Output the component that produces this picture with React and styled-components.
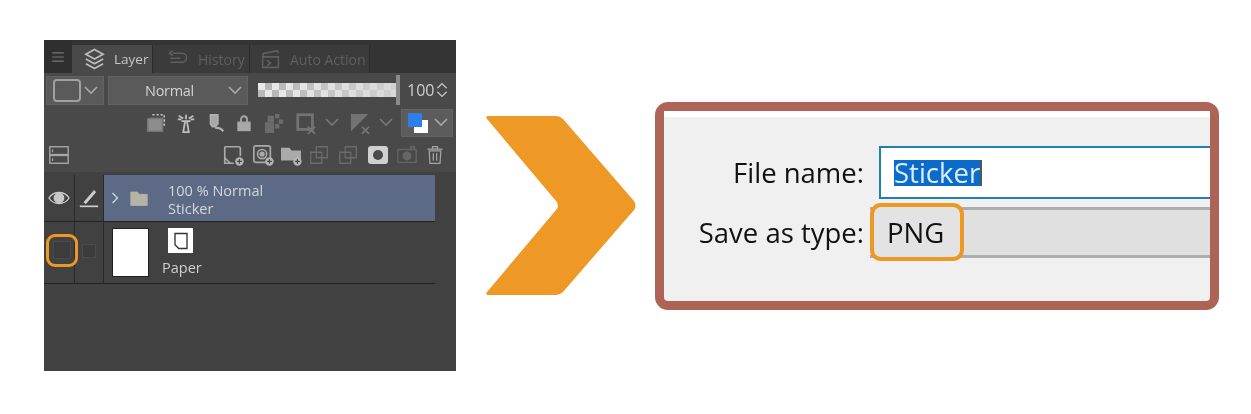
import styled, { createGlobalStyle } from 'styled-components'

const GlobalStyle = createGlobalStyle`
    html, body {
        margin: 0;
        padding: 0;
        background: #ffffff;
    }
`

const Page = styled.div`
    width: 1251px;
    height: 414px;
    box-sizing: border-box;
    padding: 40px 0 0 44px;
    display: flex;
    align-items: flex-start;
    overflow: hidden;
`

const Panel = styled.div`
    width: 412px;
    height: 331px;
    flex: none;
    display: flex;
    flex-direction: column;
    background: #414141;
    color: #c8c8c8;
    font-family: "Open Sans", "Noto Sans", sans-serif;
    filter: blur(0.45px);
`

const TabStrip = styled.div`
    height: 33px;
    flex: none;
    display: flex;
    align-items: flex-end;
    background: #343434;
`

const MenuCell = styled.div`
    width: 28px;
    height: 33px;
    display: flex;
    align-items: center;
    justify-content: center;
    background: #2f2f2f;
    color: #6f6f6f;
`

const Tab = styled.div`
    width: ${({ $w }) => $w}px;
    height: 28px;
    box-sizing: border-box;
    display: flex;
    align-items: center;
    gap: ${({ $active }) => ($active ? 8 : 9)}px;
    padding-left: ${({ $pad }) => $pad}px;
    background: ${({ $active }) => ($active ? '#494949' : '#3b3b3b')};
    color: ${({ $active }) => ($active ? '#c6c6c6' : '#5f5f5f')};
    border-right: 1px solid #2b2b2b;
    font-size: ${({ $active }) => ($active ? 13.5 : 14)}px;
`

const ToolRow = styled.div`
    height: ${({ $h }) => $h}px;
    flex: none;
    box-sizing: border-box;
    display: flex;
    align-items: center;
    background: #494949;
    padding: ${({ $pad }) => $pad || '0'};
    justify-content: ${({ $end }) => ($end ? 'flex-end' : 'flex-start')};
    gap: ${({ $gap }) => $gap || 0}px;
`

const Select = styled.div`
    width: ${({ $w }) => $w}px;
    height: 29px;
    flex: none;
    box-sizing: border-box;
    display: flex;
    align-items: center;
    justify-content: space-between;
    padding: 0 5px 0 6px;
    background: #5a5a5a;
    border: 1px solid #626262;
    margin-right: ${({ $mr }) => $mr || 0}px;
`

const SwatchSelect = styled(Select)`
    height: 28px;
    padding: 0 4px 0 5px;
    background: #5c5c5c;
`

const SelectLabel = styled.span`
    flex: 1;
    text-align: center;
    font-size: 14.5px;
    letter-spacing: -0.3px;
    color: #d2d2d2;
    padding-right: 4px;
`

const Swatch = styled.div`
    width: 24px;
    height: 19px;
    border: 2px solid #a0a0a0;
    border-radius: 4px;
`

const Opacity = styled.div`
    width: 138px;
    height: 14px;
    flex: none;
    margin-left: 10px;
    background-color: #dadada;
    background-image:
        linear-gradient(90deg, rgba(214, 214, 214, 0) 10%, rgba(214, 214, 214, 0.85) 100%),
        repeating-conic-gradient(#b8b8b8 0 25%, #e8e8e8 0 50%);
    background-size: 100% 100%, 14px 14px;
`

const OpacityThumb = styled.div`
    width: 4px;
    height: 30px;
    flex: none;
    background: #8a8a8a;
    margin-right: 7px;
`

const Percent = styled.span`
    width: 28px;
    font-size: 16px;
    color: #cfcfcf;
`

const Spinner = styled.div`
    display: flex;
    flex-direction: column;
    gap: 2px;
    color: #c0c0c0;
`

const LayerRow = styled.div`
    height: ${({ $h }) => $h}px;
    width: 391px;
    flex: none;
    display: flex;
    border-bottom: 1px solid #232323;
    margin-top: ${({ $mt }) => $mt || 0}px;
`

const VisCell = styled.div`
    width: ${({ $w }) => $w}px;
    flex: none;
    box-sizing: border-box;
    display: flex;
    align-items: center;
    justify-content: center;
    padding-bottom: ${({ $lift }) => $lift || 0}px;
    border-right: 1px solid #2a2a2a;
`

const Empty = styled.div`
    width: ${({ $s }) => $s}px;
    height: ${({ $s }) => $s}px;
    box-sizing: border-box;
    border: 1px solid #4b4b4b;
    background: #3c3c3c;
`

const Ring = styled.div`
    width: 32px;
    height: 33px;
    flex: none;
    box-sizing: border-box;
    margin: 0 -3px 0 3px;
    display: flex;
    align-items: center;
    justify-content: center;
    border: 3.5px solid #ee9824;
    border-radius: 9px;
    position: relative;
`

const LayerBody = styled.div`
    flex: 1;
    display: flex;
    align-items: ${({ $top }) => ($top ? 'flex-start' : 'center')};
    background: ${({ $selected }) => ($selected ? '#5d6a86' : 'transparent')};
    padding: ${({ $top }) => ($top ? '6px 0 0 8px' : '0 0 0 7px')};
`

const LayerTitle = styled.div`
    font-size: 14.5px;
    line-height: 18px;
    color: #d3d6dc;
    margin-left: 18px;
    padding-top: 4px;
`

const Thumb = styled.div`
    width: 37px;
    height: 49px;
    flex: none;
    background: #ffffff;
    border: 1px solid #202020;
    box-sizing: border-box;
`

const PaperInfo = styled.div`
    margin-left: 13px;
    display: flex;
    flex-direction: column;
    gap: 5px;
    font-size: 14.5px;
    color: #cfcfcf;
`

const PaperBadge = styled.div`
    width: 25px;
    height: 25px;
    box-sizing: border-box;
    margin-left: 6px;
    background: #ffffff;
    display: flex;
    align-items: center;
    justify-content: center;
    color: #333333;
`

const Arrow = styled.svg`
    flex: none;
    margin: 76px 0 0 30px;
`

const Dialog = styled.div`
    width: 564px;
    height: 208px;
    flex: none;
    box-sizing: border-box;
    margin: 62px 0 0 19px;
    border: 9px solid #ad6457;
    border-radius: 13px;
    background: #f0f0f0;
    font-family: "Open Sans", "Noto Sans", sans-serif;
    font-size: 27.5px;
    color: #111111;
`

const DialogEdge = styled.div`
    height: 35px;
    background: linear-gradient(#ffffff 0 0) top / 100% 6px no-repeat;
`

const FieldRow = styled.div`
    display: flex;
    align-items: center;
    height: ${({ $h }) => $h}px;
    margin-bottom: ${({ $mb }) => $mb || 0}px;
`

const FieldLabel = styled.div`
    width: 200px;
    flex: none;
    text-align: right;
    filter: blur(0.4px);
`

const NameInput = styled.div`
    flex: 1;
    height: 53px;
    box-sizing: border-box;
    margin-left: 15px;
    display: flex;
    align-items: center;
    padding-left: 13px;
    background: #ffffff;
    border: 2px solid #1f7fb3;
    border-right: 0;
`

const Selected = styled.span`
    background: #0a6bc8;
    color: #dcecff;
    height: 26px;
    line-height: 25px;
    border-right: 2px solid #555555;
    filter: blur(0.4px);
`

const TypeCombo = styled.div`
    flex: 1;
    height: 51px;
    box-sizing: border-box;
    margin-left: 6px;
    display: flex;
    align-items: center;
    background: #e0e0e0;
    border-top: 3px solid #adadad;
    border-bottom: 3px solid #adadad;
`

const TypeChip = styled.div`
    width: 94px;
    height: 58px;
    flex: none;
    box-sizing: border-box;
    display: flex;
    align-items: center;
    padding-left: 13px;
    border: 4px solid #ee9824;
    border-radius: 11px;
    background: #e3e3e3;
    filter: blur(0.3px);
`

const Ic = ({ w = 22, h = 22, vb = '0 0 24 24', children, color = '#9a9a9a', style }) => (
    <svg width={w} height={h} viewBox={vb} fill="none" stroke={color} strokeWidth="1.8" style={{ flex: 'none', ...style }}>
        {children}
    </svg>
)

const Chevron = ({ color = '#a8a8a8', up, w = 14, h = 9 }) => (
    <svg width={w} height={h} viewBox="0 0 14 9" fill="none" stroke={color} strokeWidth="1.6" style={{ flex: 'none' }}>
        <path d={up ? 'M1 8l6-6 6 6' : 'M1 1l6 6 6-6'} />
    </svg>
)

const Plus = () => (
    <g>
        <circle cx="19" cy="19" r="4.6" fill="#b5b5b5" stroke="none" />
        <path d="M19 16.4v5.2M16.4 19h5.2" stroke="#444" strokeWidth="1.2" />
    </g>
)

function App() {
    return (
        <>
            <GlobalStyle />
            <Page>
                <Panel>
                    <TabStrip>
                        <MenuCell>
                            <Ic w={14} h={14} color="#777">
                                <path d="M2 5h20M2 12h20M2 19h20" strokeWidth="2" />
                            </Ic>
                        </MenuCell>
                        <Tab $w={81} $pad={11} $active>
                            <Ic w={23} h={26} color="#bdbdbd">
                                <path d="M12 2l9 5-9 5-9-5zM3 12l9 5 9-5M3 17l9 5 9-5" />
                            </Ic>
                            Layer
                        </Tab>
                        <Tab $w={97} $pad={12}>
                            <Ic w={24} h={20} color="#5f5f5f">
                                <path d="M7 5h11a5 5 0 0 1 0 11H4M7 2L3 5l4 3M4 11h12" />
                            </Ic>
                            History
                        </Tab>
                        <Tab $w={120} $pad={10}>
                            <Ic w={21} h={21} color="#5f5f5f">
                                <path d="M3 9h18v12H3zM3 9l1-4 16-3 1 3M8 13l4 3-4 3" />
                            </Ic>
                            Auto Action
                        </Tab>
                    </TabStrip>
                    <ToolRow $h={34} $pad="0 0 0 2px">
                        <Select $w={58} $mr={4}>
                            <Swatch />
                            <Chevron />
                        </Select>
                        <Select $w={140}>
                            <SelectLabel>Normal</SelectLabel>
                            <Chevron />
                        </Select>
                        <Opacity />
                        <OpacityThumb />
                        <Percent>100</Percent>
                        <Spinner>
                            <Chevron up color="#c8c8c8" h={7} />
                            <Chevron color="#c8c8c8" h={7} />
                        </Spinner>
                    </ToolRow>
                    <ToolRow $h={31} $pad="0 3px 0 0" $end $gap={8}>
                        <Ic>
                            <path d="M5 7h14v14H3V7" fill="#8d8d8d" stroke="#777" />
                            <path d="M8 3h13v13" strokeDasharray="2.5 2" stroke="#c0c0c0" />
                        </Ic>
                        <Ic color="#bdbdbd">
                            <path d="M9 22l2-12h2l2 12zM7 10h10M12 3v5M4 4l5 3M20 4l-5 3M3 8h4M17 8h4" strokeWidth="2" />
                        </Ic>
                        <Ic color="#b0b0b0">
                            <path d="M6 3h8v10l-3 3H8L6 13z" fill="#a8a8a8" />
                            <path d="M11 17c3 0 6 0 9 4" strokeWidth="2.4" />
                        </Ic>
                        <Ic w={18} color="#a8a8a8">
                            <rect x="4" y="11" width="16" height="11" fill="#a8a8a8" />
                            <path d="M8 11V7a4 4 0 0 1 8 0v4" strokeWidth="2.4" />
                        </Ic>
                        <Ic color="#6c6c6c" style={{ marginLeft: 2 }}>
                            <path d="M3 12h8v10H3zM6 5h5v5H6zM14 3h3v3h-3zM18 9h3v3h-3zM14 14h3v3h-3z" fill="#6c6c6c" />
                        </Ic>
                        <Ic color="#737373" style={{ marginLeft: 2 }}>
                            <rect x="3" y="3" width="16" height="16" strokeWidth="3" />
                            <path d="M14 16l8 8M22 16l-8 8" strokeWidth="2" />
                        </Ic>
                        <Chevron color="#787878" />
                        <Ic color="#737373" style={{ marginLeft: 2 }}>
                            <path d="M3 3h16L3 19z" fill="#737373" />
                            <path d="M14 16l8 8M22 16l-8 8" strokeWidth="2" />
                        </Ic>
                        <Chevron color="#787878" />
                        <SwatchSelect $w={52}>
                            <svg width="22" height="22" viewBox="0 0 22 22" style={{ flex: 'none' }}>
                                <rect x="7" y="8" width="14" height="13" fill="#fff" />
                                <rect x="1" y="1" width="14" height="14" fill="#2f7fe8" />
                            </svg>
                            <Chevron />
                        </SwatchSelect>
                    </ToolRow>
                    <ToolRow $h={34} $pad="0 8px 0 4px" $gap={6}>
                        <Ic color="#a8a8a8" style={{ marginRight: 146 }}>
                            <rect x="2" y="3" width="20" height="8.5" strokeWidth="1.5" />
                            <rect x="2" y="12.5" width="20" height="8.5" strokeWidth="1.5" />
                            <path d="M5 6v3M5 15.5v3" strokeWidth="1.2" />
                        </Ic>
                        <Ic color="#aaaaaa">
                            <path d="M3 3h15a2 2 0 0 1 2 2v8M13 21H3V3M3 15l6 6" />
                            <Plus />
                        </Ic>
                        <Ic color="#aaaaaa" style={{ marginLeft: 2 }}>
                            <rect x="2" y="2" width="18" height="18" rx="2" />
                            <circle cx="11" cy="11" r="5" />
                            <circle cx="11" cy="11" r="2" fill="#aaa" />
                            <Plus />
                        </Ic>
                        <Ic color="#aaaaaa">
                            <path d="M2 5h8l2 3h10v9H2z" fill="#aaaaaa" />
                            <Plus />
                        </Ic>
                        <Ic color="#6b6b6b">
                            <path d="M9 3h12v12H9zM3 9h12v12H3z" strokeWidth="1.4" />
                        </Ic>
                        <Ic color="#6b6b6b" style={{ marginLeft: 1 }}>
                            <path d="M9 3h12v12H9zM3 9h12v12H3z" strokeWidth="1.4" />
                        </Ic>
                        <svg width="22" height="22" viewBox="0 0 22 22" style={{ flex: 'none', marginLeft: 2 }}>
                            <rect x="1" y="2" width="20" height="18" rx="3" fill="#d0d0d0" />
                            <circle cx="11" cy="11" r="5" fill="#4a4a4a" />
                        </svg>
                        <Ic color="#666666" w={24}>
                            <path d="M2 6h20v14H2zM16 6V3h4v3" strokeWidth="1.4" />
                            <circle cx="12" cy="13" r="4" fill="#666" />
                        </Ic>
                        <Ic color="#a5a5a5" w={20}>
                            <path d="M5 7h14l-1 15H6zM3 5h18M9 5V2h6v3M10 10v9M14 10v9" strokeWidth="1.5" />
                        </Ic>
                    </ToolRow>
                    <LayerRow $h={46} $mt={3}>
                        <VisCell $w={31}>
                            <Ic w={22} h={16} vb="0 0 24 16" color="#c8c8c8">
                                <path d="M1 8c5-8 17-8 22 0-5 8-17 8-22 0z" strokeWidth="1.5" />
                                <circle cx="12" cy="8" r="5" fill="#c8c8c8" />
                            </Ic>
                        </VisCell>
                        <VisCell $w={29}>
                            <Ic w={22} h={20} color="#cfcfcf">
                                <path d="M6 17L18 3l2 2L8 19z" fill="#cfcfcf" strokeWidth="1" />
                                <path d="M1 22h22" strokeWidth="2" />
                            </Ic>
                        </VisCell>
                        <LayerBody $selected>
                            <Ic w={8} h={12} vb="0 0 8 12" color="#c8d0dc">
                                <path d="M1.5 1l5 5-5 5" strokeWidth="1.5" />
                            </Ic>
                            <Ic w={22} h={18} color="#b5b3a6" style={{ marginLeft: 9 }}>
                                <path d="M1 4h9l2 3h11v15H1z" fill="#b5b3a6" strokeWidth="1" />
                            </Ic>
                            <LayerTitle>
                                100 % Normal
                                <br />
                                Sticker
                            </LayerTitle>
                        </LayerBody>
                    </LayerRow>
                    <LayerRow $h={61}>
                        <VisCell $w={31} $lift={5}>
                            <Ring>
                                <Empty $s={18} />
                            </Ring>
                        </VisCell>
                        <VisCell $w={29} $lift={4}>
                            <Empty $s={14} />
                        </VisCell>
                        <LayerBody $top>
                            <Thumb />
                            <PaperInfo>
                                <PaperBadge>
                                    <Ic w={18} h={20} color="#333">
                                        <path d="M4 2h16v20H9l-5-5z" />
                                    </Ic>
                                </PaperBadge>
                                Paper
                            </PaperInfo>
                        </LayerBody>
                    </LayerRow>
                </Panel>
                <Arrow width="150" height="179" viewBox="0 0 150 179">
                    <path
                        d="M2 0H70Q74 0 77 3L148 85Q151 89.5 148 94L77 176Q74 179 70 179H2Q-1 179 1 176L70 94Q74 89.5 70 85L1 3Q-1 0 2 0Z"
                        fill="#ee9826"
                    />
                </Arrow>
                <Dialog>
                    <DialogEdge />
                    <FieldRow $h={53} $mb={4}>
                        <FieldLabel>File name:</FieldLabel>
                        <NameInput>
                            <Selected>Sticker</Selected>
                        </NameInput>
                    </FieldRow>
                    <FieldRow $h={58}>
                        <FieldLabel>Save as type:</FieldLabel>
                        <TypeCombo>
                            <TypeChip>PNG</TypeChip>
                        </TypeCombo>
                    </FieldRow>
                </Dialog>
            </Page>
        </>
    )
}

export default App
